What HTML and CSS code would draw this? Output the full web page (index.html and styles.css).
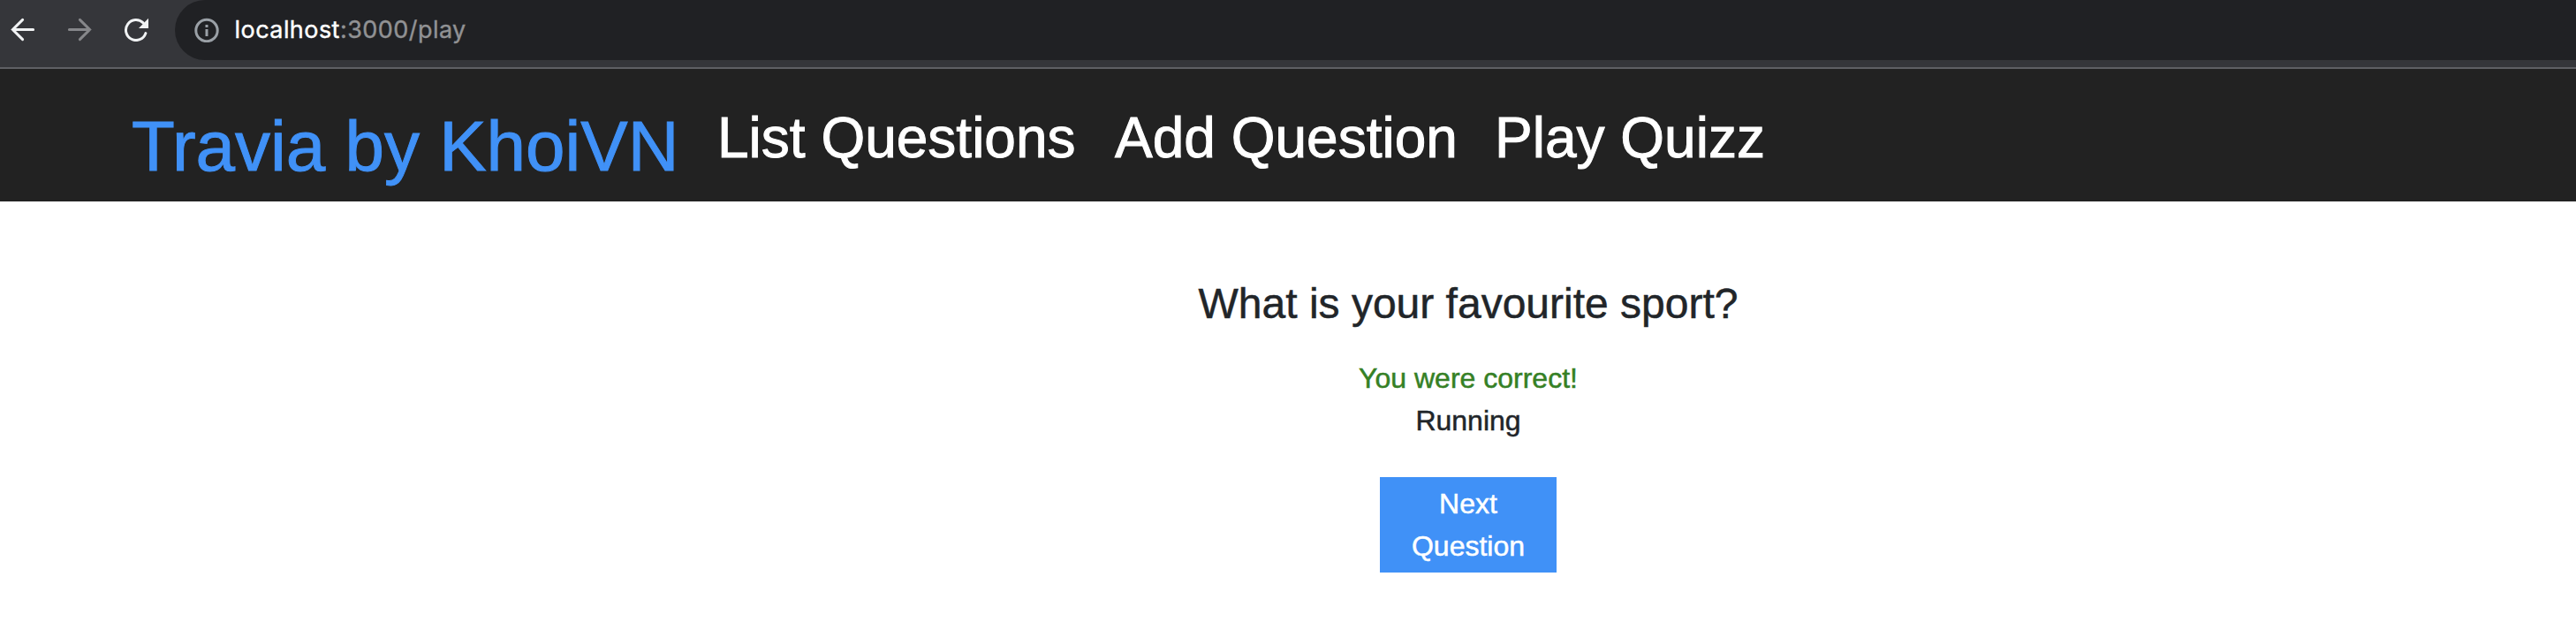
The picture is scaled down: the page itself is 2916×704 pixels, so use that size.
FILE: index.html
```html
<!DOCTYPE html>
<html lang="en">
<head>
<meta charset="utf-8">
<title>Travia by KhoiVN</title>
<link rel="stylesheet" href="styles.css">
</head>
<body>
<div class="toolbar">
  <div class="controls">
    <svg class="icon" viewBox="0 0 28 28"><path d="M25.6 14.5H2.5M13.6 3.4L2.4 14.5l11.2 11.1"/></svg>
    <svg class="icon icon-muted" viewBox="0 0 28 28"><path d="M2.4 14.5h23.1M14.4 3.4l11.2 11.1-11.2 11.1"/></svg>
    <svg class="icon" viewBox="0 0 28 28"><path d="M24.9 18.6A11.5 11.5 0 1 1 22.1 6.9"/><path class="solid" d="M28 1.8V13H17z"/></svg>
  </div>
  <div class="address">
    <svg class="info" viewBox="0 0 28 28"><circle cx="14" cy="14.5" r="12.2"/><path d="M14 13v8M14 8v3"/></svg>
    <span class="url"><span class="host">localhost</span><span class="path">:3000/play</span></span>
  </div>
</div>
<nav class="navbar">
  <a class="brand">Travia by KhoiVN</a>
  <a class="link link-list">List Questions</a>
  <a class="link link-add">Add Question</a>
  <a class="link link-play">Play Quizz</a>
</nav>
<main class="quiz">
  <h1 class="question">What is your favourite sport?</h1>
  <div class="result">You were correct!</div>
  <div class="answer">Running</div>
  <div class="next">Next Question</div>
</main>
</body>
</html>
```
FILE: styles.css
```css
* { box-sizing: border-box; }
body {
  margin: 0;
  height: 704px;
  overflow: hidden;
  background: #fff;
  color: #212529;
  font: 32px/48px "Liberation Sans", Arial, sans-serif;
  -webkit-text-stroke: 0.5px currentColor;
}
.toolbar {
  display: flex;
  align-items: flex-start;
  height: 78px;
  background: #35363a;
  border-bottom: 2px solid #5f6064;
}
.controls {
  display: flex;
  gap: 36px;
  width: 198px;
  padding: 19px 0 0 12px;
}
.icon {
  flex: none;
  width: 28px;
  height: 28px;
  fill: none;
  stroke: #f1f3f4;
  stroke-width: 3;
  stroke-linecap: round;
}
.icon-muted { stroke: #86878a; }
.solid { fill: #f1f3f4; stroke: none; }
.address {
  flex: 1;
  display: flex;
  height: 68px;
  padding: 20px 0 0 22px;
  background: #202124;
  border-radius: 34px 0 0 34px;
}
.info {
  flex: none;
  width: 28px;
  height: 28px;
  fill: none;
  stroke: #9aa0a6;
  stroke-width: 3;
}
.url {
  margin: -4px 0 0 17.5px;
  font: 27px/36px Inter, Roboto, sans-serif;
  letter-spacing: 0.45px;
  white-space: nowrap;
  -webkit-text-stroke: 0.4px currentColor;
}
.host { color: #fff; }
.path { color: #919294; }
.navbar {
  display: flex;
  align-items: flex-start;
  height: 150px;
  padding: 28px 0 0 149px;
  background: #222;
  white-space: nowrap;
  -webkit-text-stroke: 1px currentColor;
}
.brand {
  width: 663px;
  font-size: 80px;
  line-height: 120px;
  color: #4091f7;
}
.link {
  padding-top: 2px;
  font-size: 64px;
  line-height: 96px;
  color: #fff;
}
.link-list { width: 450px; }
.link-add { width: 430px; }
.quiz {
  display: flex;
  flex-direction: column;
  align-items: center;
  width: 1000px;
  margin-left: 1162px;
  padding-top: 87px;
  text-align: center;
}
.question {
  margin: 0 0 31px;
  font-size: 48px;
  font-weight: 400;
  line-height: 58px;
}
.result { color: #358025; }
.next {
  width: 200px;
  margin-top: 40px;
  padding: 6px 24px;
  background: #4091f7;
  color: #fff;
}
```
